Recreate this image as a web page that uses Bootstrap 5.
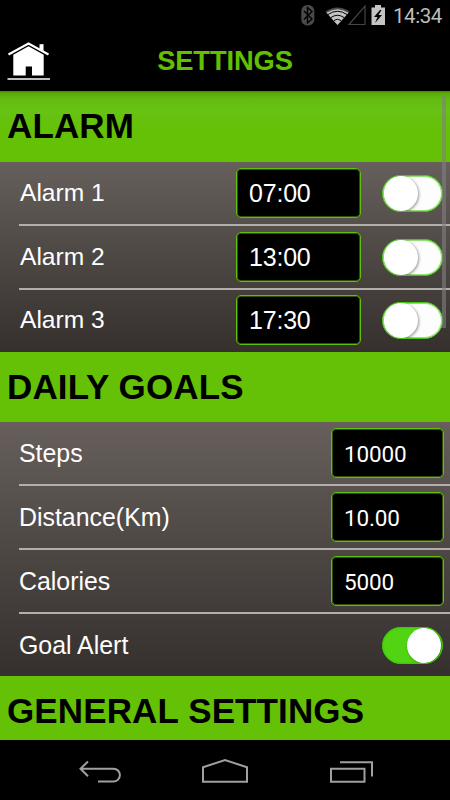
<!DOCTYPE html>
<html lang="en">
<head>
<meta charset="utf-8">
<meta name="viewport" content="width=device-width, initial-scale=1">
<title>Settings</title>
<link href="https://cdn.jsdelivr.net/npm/bootstrap@5.3.0/dist/css/bootstrap.min.css" rel="stylesheet">
<style>
body{width:450px;height:800px;background:#000;color:#fff;font-family:"Liberation Sans",Arial,sans-serif}
.status{height:34px;padding-right:8px}
.clock{font:20.5px/32px Roboto,sans-serif;color:#bdbdbd;letter-spacing:-.4px;margin-left:1px}
.titlebar{height:57px}
.titlebar .home{width:64px}
.titlebar h1{font-size:27.3px;line-height:54px;color:#62c003;letter-spacing:-.1px}
.main{height:649px}
.band{background:#64c105;color:#000;font-size:35px;line-height:69px;height:70px;padding-left:7px;white-space:nowrap;letter-spacing:.12px}
.band.top{height:71px;line-height:70px;background:linear-gradient(#467a1c 0,#58ab04 2px,#64bb10 8px,#68c214 18px,#64c105 42px)}
.band.cut{height:64px}
.panel{background:linear-gradient(#665f5c,#35302d)}
.panel.alarms{height:190px}
.panel.goals{height:254px}
.line{height:64px;margin-left:19px;padding-right:7px;border-bottom:2px solid #b1aeab;font-size:24.6px}
.goals .line{font-size:24.9px}
.line:last-child{height:62px;border-bottom:0}
.alarms .line:last-child{padding-bottom:2px}
.lbl{line-height:60px;padding-left:1px}
.goals .lbl{padding-left:0}
.field{height:50px;border:1px solid #62bf09;box-shadow:inset 0 0 0 1px #62bf0970;border-radius:5px;background:#000;color:#fff;line-height:48px}
.field.time{width:125px;margin-right:21px;padding-left:12px;font-size:25px;letter-spacing:-.2px}
.field.num{width:113px;margin-right:-1px;padding-left:12px;font:22.5px/50px Roboto,sans-serif;letter-spacing:-.15px}
.toggle{width:61px;height:37px;border-radius:19px;border:1px solid #43c80e;box-shadow:inset 0 0 0 1px #43c80e90;background:#fdfdfd;overflow:hidden;padding-left:1px}
.knob{width:34px;height:35px;background:#fff;box-shadow:1px 1px 3px #0006}
.toggle.on{background:#51d513;padding-right:1px}
.thumb{right:4px;top:96px;width:4px;height:232px;background:#8080809c}
.navi{height:60px}
</style>
<script src="https://cdn.jsdelivr.net/npm/bootstrap@5.3.0/dist/js/bootstrap.bundle.min.js"></script>
</head>
<body class="position-relative overflow-hidden d-flex flex-column">
<div class="status d-flex justify-content-end flex-shrink-0">
  <svg width="92" height="34" viewBox="300 0 92 34">
    <rect x="301.300" y="5" width="13" height="20.500" rx="6" fill="#4a4a4a"/>
    <path d="M304 11l8 8-4.500 4V7.500l4.500 4-8 8" fill="none" stroke="#000" stroke-width="1.400"/>
    <path d="M325.500 11.500Q337.500 3.500 349.500 11.500L337.500 25Z" fill="#4a4a4a"/>
    <path d="M326.500 12.800Q337.500 5.500 348.500 12.800L337.500 25Z" fill="#c4c4c4"/>
    <path d="M328 14.500Q337.500 8 347 14.500M331 17.500Q337.500 13 344 17.500M334 20.500Q337.500 18 341 20.500" fill="none" stroke="#000" stroke-width="1"/>
    <path d="M365 6V24.500H349Z" fill="none" stroke="#454545" stroke-width="1.200"/>
    <path d="M371.500 7.500h3.500V5h6v2.500h4V25h-13.500Z" fill="#c4c4c4"/>
    <path d="M380 10l-6 7h3.500l-2.500 6 7-8h-3.500l3-5Z" fill="#000"/>
  </svg>
  <span class="clock">14:34</span>
</div>
<header class="titlebar d-flex flex-shrink-0">
  <a class="home" href="#" aria-label="Home"><svg width="64" height="57" viewBox="0 34 64 57">
    <path d="M8.500 54.500L28.500 43.500 48.500 54.500M42 50v-5.500" fill="none" stroke="#fff" stroke-width="2.200"/>
    <path d="M39.500 44.300h4v8l-4-2.200ZM13.300 54.800L28.500 46.300 43.700 54.800V75.500H32V66.500h-6.300v9H13.300Z" fill="#fff"/>
    <path d="M7.500 79h42.500" stroke="#fff" stroke-width="1.500"/>
  </svg></a>
  <h1 class="fw-bold flex-grow-1 text-center mb-0 pe-5 me-3"><span>SETTINGS</span></h1>
</header>
<main class="main flex-shrink-0 overflow-hidden">
  <h2 class="band top fw-bold mb-0">ALARM</h2>
  <section class="panel alarms">
    <div class="line d-flex align-items-center"><span class="lbl me-auto">Alarm 1</span><div class="field time">07:00</div><div class="toggle"><div class="knob rounded-circle"></div></div></div>
    <div class="line d-flex align-items-center"><span class="lbl me-auto">Alarm 2</span><div class="field time">13:00</div><div class="toggle"><div class="knob rounded-circle"></div></div></div>
    <div class="line d-flex align-items-center"><span class="lbl me-auto">Alarm 3</span><div class="field time">17:30</div><div class="toggle"><div class="knob rounded-circle"></div></div></div>
  </section>
  <h2 class="band fw-bold mb-0">DAILY GOALS</h2>
  <section class="panel goals">
    <div class="line d-flex align-items-center"><span class="lbl me-auto">Steps</span><div class="field num">10000</div></div>
    <div class="line d-flex align-items-center"><span class="lbl me-auto">Distance(Km)</span><div class="field num">10.00</div></div>
    <div class="line d-flex align-items-center"><span class="lbl me-auto">Calories</span><div class="field num">5000</div></div>
    <div class="line d-flex align-items-center"><span class="lbl me-auto">Goal Alert</span><div class="toggle on d-flex justify-content-end"><div class="knob rounded-circle"></div></div></div>
  </section>
  <h2 class="band cut fw-bold mb-0">GENERAL SETTINGS</h2>
</main>
<nav class="navi flex-shrink-0">
  <svg width="450" height="60" viewBox="0 740 450 60" fill="none" stroke="#a0a0a0" stroke-width="2">
    <path d="M88 761.500L80.500 768.700l7.500 7.500M80.500 768.700h33a6.400 6.400 0 0 1 0 12.800H98"/>
    <path d="M203 781.800V767.300L225 760l22 7.300v14.500Z"/>
    <path d="M331 768.700h33.500v13H331ZM340 762.200h32V776.500"/>
  </svg>
</nav>
<div class="thumb position-absolute"></div>
</body>
</html>
